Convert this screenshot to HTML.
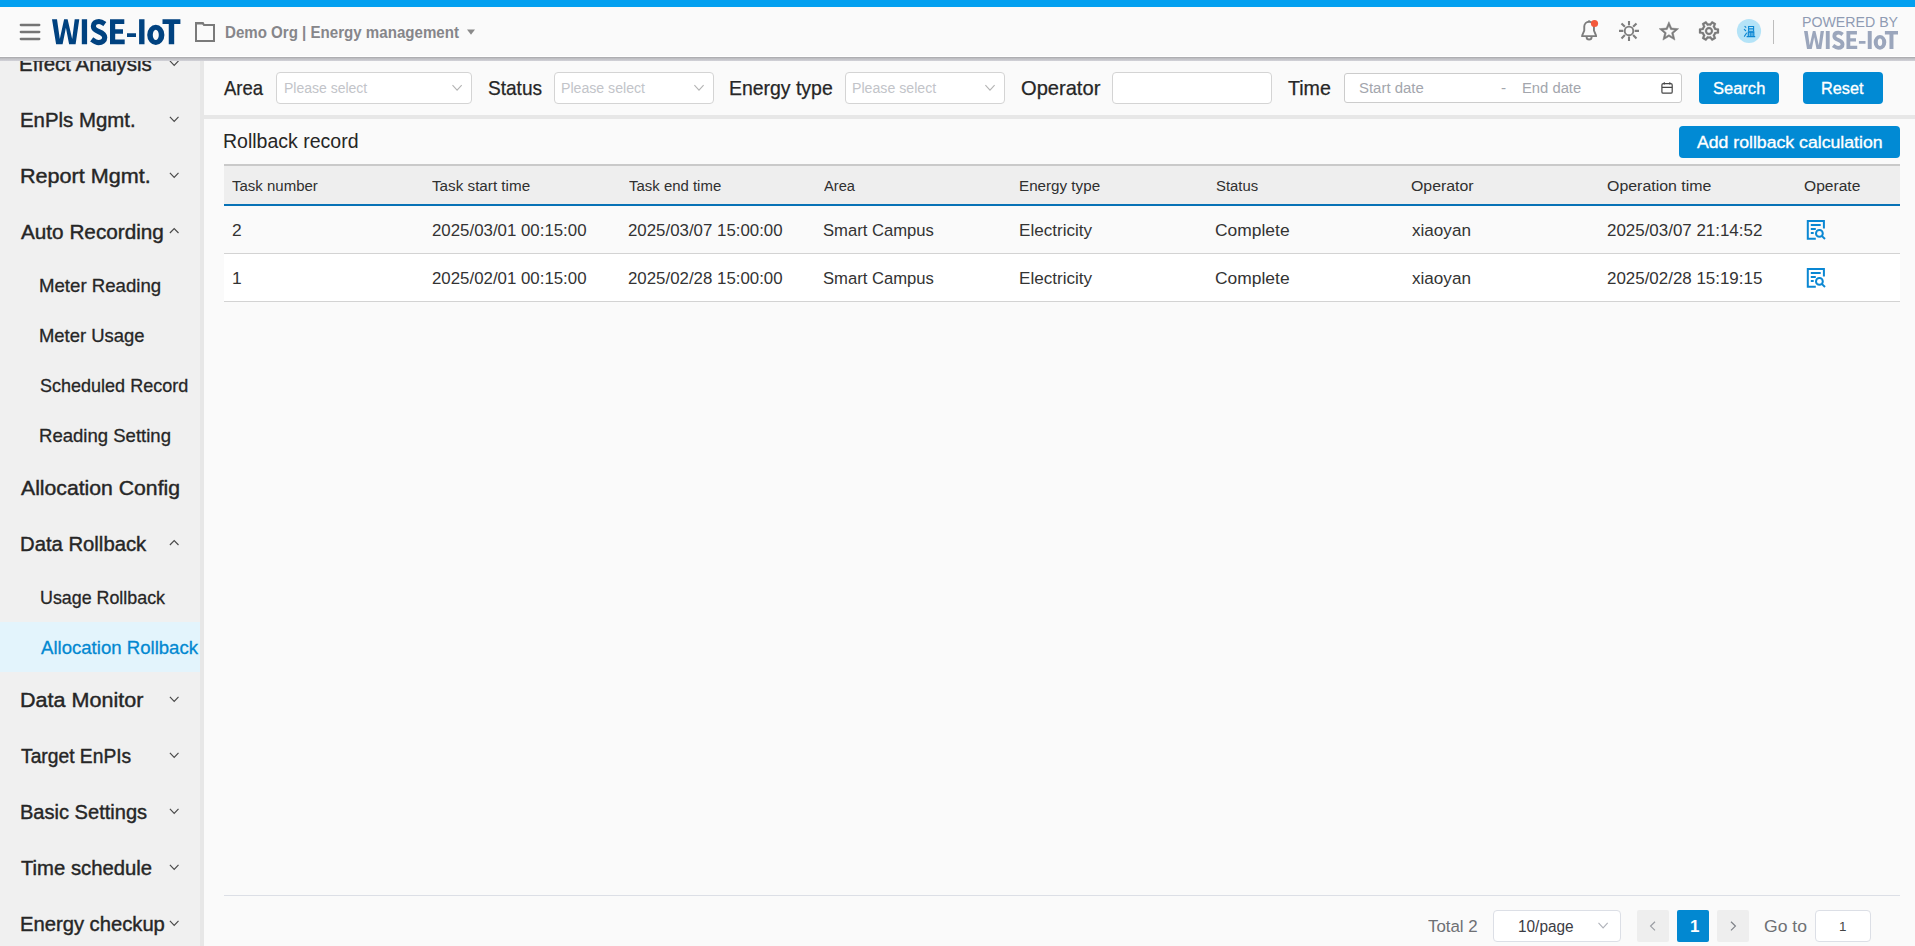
<!DOCTYPE html>
<html lang="en">
<head>
<meta charset="utf-8">
<title>WISE-IoT Energy management - Allocation Rollback</title>
<style>
*{box-sizing:border-box;margin:0;padding:0}
html,body{width:1915px;height:946px;overflow:hidden;background:#fafafa;font-family:"Liberation Sans",sans-serif;}
body{position:relative}
.abs,.t,.ico,.box{position:absolute}
.t{white-space:nowrap;line-height:1;transform-origin:0 50%;}
#topbar{left:0;top:0;width:1915px;height:7px;background:#03a0f0;z-index:30}
#header{left:0;top:7px;width:1915px;height:50px;background:#fafafa;border-bottom:1px solid #fff;z-index:20}
#hshadow{left:0;top:57px;width:1915px;height:4px;background:linear-gradient(#a6a6a8,#bdbdc1 35%,#d3d3d9);z-index:20}
#sidebar{left:0;top:57px;width:200px;height:889px;background:#f0f0f0;overflow:hidden}
#strip{left:200px;top:57px;width:4px;height:889px;background:#e7e7e7}
#gap{left:204px;top:115px;width:1711px;height:4px;background:#e7e7e7}
#active{left:0;top:565px;width:200px;height:50px;background:#e3f4fc}
.sel{background:#fff;border:1px solid #d4d4d4;border-radius:4px}
.btn{background:#018ad4;border-radius:4px}
#thead{left:224px;top:164px;width:1676px;height:42px;background:#eee;border-top:2px solid #c9c9c9;border-bottom:2px solid #0772b6}
.row{left:224px;width:1676px;height:48px;border-bottom:1px solid #d3d3d3}
#pgline{left:224px;top:895px;width:1676px;height:1px;background:#dcdfe6}
.pgb{background:#eeeeee;border-radius:2px;top:910px;width:32px;height:32px}
.logo{font-weight:bold;transform-origin:0 0;letter-spacing:0}
</style>
</head>
<body>
<div id="sidebar" class="abs">
<div id="active" class="abs"></div>
</div>
<div id="strip" class="abs"></div>
<div id="gap" class="abs"></div>

<!-- sidebar text (page coords) -->
<nav>
<span class="t" id="s_eff" style="left:19.00px;top:55.00px;font-size:19.9px;color:#262626;transform:scaleX(1.0292);-webkit-text-stroke:0.4px currentColor;">Effect Analysis</span>
<span class="t" id="s_enp" style="left:20.00px;top:111.00px;font-size:19.9px;color:#262626;transform:scaleX(1.0258);-webkit-text-stroke:0.4px currentColor;">EnPls Mgmt.</span>
<span class="t" id="s_rep" style="left:20.00px;top:167.00px;font-size:19.9px;color:#262626;transform:scaleX(1.0854);-webkit-text-stroke:0.4px currentColor;">Report Mgmt.</span>
<span class="t" id="s_auto" style="left:21.00px;top:223.00px;font-size:19.9px;color:#262626;transform:scaleX(1.0421);-webkit-text-stroke:0.4px currentColor;">Auto Recording</span>
<span class="t" id="s_alloc" style="left:21.00px;top:479.00px;font-size:19.9px;color:#262626;transform:scaleX(1.0653);-webkit-text-stroke:0.4px currentColor;">Allocation Config</span>
<span class="t" id="s_data" style="left:20.00px;top:535.00px;font-size:19.9px;color:#262626;transform:scaleX(1.0192);-webkit-text-stroke:0.4px currentColor;">Data Rollback</span>
<span class="t" id="s_mon" style="left:20.00px;top:691.00px;font-size:19.9px;color:#262626;transform:scaleX(1.0829);-webkit-text-stroke:0.4px currentColor;">Data Monitor</span>
<span class="t" id="s_tgt" style="left:21.00px;top:747.00px;font-size:19.9px;color:#262626;transform:scaleX(0.9682);-webkit-text-stroke:0.4px currentColor;">Target EnPIs</span>
<span class="t" id="s_bas" style="left:20.00px;top:803.00px;font-size:19.9px;color:#262626;transform:scaleX(1.0081);-webkit-text-stroke:0.4px currentColor;">Basic Settings</span>
<span class="t" id="s_tim" style="left:21.00px;top:859.00px;font-size:19.9px;color:#262626;transform:scaleX(1.0185);-webkit-text-stroke:0.4px currentColor;">Time schedule</span>
<span class="t" id="s_chk" style="left:20.00px;top:915.00px;font-size:19.9px;color:#262626;transform:scaleX(1.0155);-webkit-text-stroke:0.4px currentColor;">Energy checkup</span>
<span class="t" id="ss1" style="left:39.00px;top:276.00px;font-size:19.0px;color:#262626;transform:scaleX(0.9796);-webkit-text-stroke:0.3px currentColor;">Meter Reading</span>
<span class="t" id="ss2" style="left:39.00px;top:326.00px;font-size:19.0px;color:#262626;transform:scaleX(0.9703);-webkit-text-stroke:0.3px currentColor;">Meter Usage</span>
<span class="t" id="ss3" style="left:40.00px;top:376.00px;font-size:19.0px;color:#262626;transform:scaleX(0.9480);-webkit-text-stroke:0.3px currentColor;">Scheduled Record</span>
<span class="t" id="ss4" style="left:39.00px;top:426.00px;font-size:19.0px;color:#262626;transform:scaleX(0.9759);-webkit-text-stroke:0.3px currentColor;">Reading Setting</span>
<span class="t" id="ss5" style="left:40.00px;top:588.00px;font-size:19.0px;color:#262626;transform:scaleX(0.9393);-webkit-text-stroke:0.3px currentColor;">Usage Rollback</span>
<span class="t" id="ss6" style="left:41.00px;top:638.00px;font-size:19.0px;color:#0288d1;transform:scaleX(0.9781);-webkit-text-stroke:0.3px currentColor;">Allocation Rollback</span>
<svg class="ico" style="left:0;top:0" width="200" height="946" viewBox="0 0 200 946">
<path d="M169.9 60.9L174.2 65.3L178.5 60.9" stroke="#4a4a4a" stroke-width="1.2" fill="none"/>
<path d="M169.9 116.9L174.2 121.3L178.5 116.9" stroke="#4a4a4a" stroke-width="1.2" fill="none"/>
<path d="M169.9 172.9L174.2 177.3L178.5 172.9" stroke="#4a4a4a" stroke-width="1.2" fill="none"/>
<path d="M169.9 233.0L174.2 228.6L178.5 233.0" stroke="#4a4a4a" stroke-width="1.2" fill="none"/>
<path d="M169.9 545.0L174.2 540.6L178.5 545.0" stroke="#4a4a4a" stroke-width="1.2" fill="none"/>
<path d="M169.9 696.9L174.2 701.3L178.5 696.9" stroke="#4a4a4a" stroke-width="1.2" fill="none"/>
<path d="M169.9 752.9L174.2 757.3L178.5 752.9" stroke="#4a4a4a" stroke-width="1.2" fill="none"/>
<path d="M169.9 808.9L174.2 813.3L178.5 808.9" stroke="#4a4a4a" stroke-width="1.2" fill="none"/>
<path d="M169.9 864.9L174.2 869.3L178.5 864.9" stroke="#4a4a4a" stroke-width="1.2" fill="none"/>
<path d="M169.9 920.9L174.2 925.3L178.5 920.9" stroke="#4a4a4a" stroke-width="1.2" fill="none"/>
</svg>
</nav>

<div id="topbar" class="abs"></div>
<div id="header" class="abs"></div>
<div id="hshadow" class="abs"></div>

<!-- header content -->
<div class="abs" style="left:0;top:0;z-index:25">
<svg class="ico" style="left:18px;top:20px" width="26" height="24" viewBox="0 0 26 24"><path d="M2.8 5H21.3M2.8 12H21.3M2.8 19H21.3" stroke="#747474" stroke-width="2.3" stroke-linecap="round"/></svg>
<svg class="ico" style="left:48px;top:14px;color:#004280" width="136" height="36" viewBox="48 14 136 36" fill="currentColor" role="img" aria-label="WISE-IoT"><path d="M52 19.3L57 19.3L59.8 39.1L64.1 19.3L67.6 19.3L72.2 39.1L74.7 19.3L79.3 19.3L75.6 44.3L69.1 44.3L65.9 27.8L62.6 44.3L56.1 44.3ZM81.8 19.3H87.1V44.3H81.8ZM110 19.3H124.3V24H115.2V29.3H123V33.8H115.2V39.6H124.7V44.3H110ZM127 33.2H136V36.9H127ZM139.1 19.3H144.5V44.3H139.1ZM162.5 19.3H180.4V23.9H174.2V44.3H168.75V23.9H162.5Z"/><path fill-rule="evenodd" d="M147.2 34.9A8.6 10.2 0 1 0 164.4 34.9A8.6 10.2 0 1 0 147.2 34.9ZM152.8 34.9A3 5.2 0 1 1 158.8 34.9A3 5.2 0 1 1 152.8 34.9Z"/><path fill="none" stroke="currentColor" stroke-width="5.2" d="M104.8 24.1C103.2 22.9 101.6 21.5 99 21.5C95.6 21.5 93.4 23.4 93.4 26.3C93.4 29.3 95.8 30.5 99 31.7C102.4 33 104.7 34.4 104.7 37.6C104.7 40.8 102.2 42.6 98.6 42.6C95.6 42.6 93.3 40.5 91.7 39.3"/></svg>
<svg class="ico" style="left:194px;top:21px" width="24" height="23" viewBox="0 0 24 23"><path d="M2 20V2H8.6L10 4H20V20Z" fill="none" stroke="#7a7a7a" stroke-width="2" stroke-linejoin="miter"/><path d="M1 1H9.3L10.6 3.4H1Z" fill="#7a7a7a"/></svg>
<span class="t" id="h_org" style="left:225.00px;top:24.00px;font-size:17.1px;color:#86868a;transform:scaleX(0.8826);font-weight:bold;">Demo Org | Energy management</span>
<svg class="ico" style="left:466px;top:28px" width="10" height="8" viewBox="0 0 10 8"><path d="M1 1.6H9L5 6.8Z" fill="#8a8a8a"/></svg>

<!-- bell -->
<svg class="ico" style="left:1577px;top:17px" width="26" height="26" viewBox="0 0 26 26" fill="none" stroke="#7d7d7d" stroke-width="1.9">
<path d="M4.2 19.1H20M5 18.8L7.25 13.5V9.6A4.85 4.85 0 0 1 16.95 9.6V13.5L19.2 18.8"/><path d="M9.6 19.9A2.5 2.6 0 0 0 14.6 19.9"/><path d="M12.1 4.6V3.4" stroke-width="2"/>
<circle cx="17.5" cy="6.5" r="3.6" fill="#f4593b" stroke="none"/></svg>
<!-- sun -->
<svg class="ico" style="left:1617px;top:19px" width="24" height="24" viewBox="0 0 24 24" fill="none" stroke="#7d7d7d" stroke-width="1.9">
<circle cx="12" cy="11.9" r="4.3"/><path stroke-width="2.1" d="M12 1.9V6.2M12 17.6V21.9M2 11.9H6.3M17.7 11.9H22M4.5 4.4L7.9 7.8M16.1 16L19.5 19.4M19.5 4.4L16.1 7.8M7.9 16L4.5 19.4"/></svg>
<!-- star -->
<svg class="ico" style="left:1657px;top:19px" width="24" height="24" viewBox="0 0 24 24"><path transform="translate(0.25 0.7) scale(0.972)" fill="#7b7b7b" stroke="#7b7b7b" stroke-width="0.55" d="M22 9.24l-7.19-.62L12 2 9.19 8.63 2 9.24l5.46 4.73L5.82 21 12 17.27 18.18 21l-1.63-7.03L22 9.24zM12 15.4l-3.76 2.27 1-4.28-3.32-2.88 4.38-.38L12 6.1l1.71 4.04 4.38.38-3.32 2.88 1 4.28L12 15.4z"/></svg>
<!-- gear -->
<svg class="ico" style="left:1697px;top:19px" width="24" height="24" viewBox="0 0 24 24"><g transform="rotate(90 12 12)" fill="#7b7b7b" stroke="#7b7b7b" stroke-width="0.25"><path d="M19.43 12.98c.04-.32.07-.64.07-.98 0-.34-.03-.66-.07-.98l2.11-1.65c.19-.15.24-.42.12-.64l-2-3.46c-.09-.16-.26-.25-.44-.25-.06 0-.12.01-.17.03l-2.49 1c-.52-.4-1.08-.73-1.69-.98l-.38-2.65C14.46 2.18 14.25 2 14 2h-4c-.25 0-.46.18-.49.42l-.38 2.65c-.61.25-1.17.59-1.69.98l-2.49-1c-.06-.02-.12-.03-.18-.03-.17 0-.34.09-.43.25l-2 3.46c-.13.22-.07.49.12.64l2.11 1.65c-.04.32-.07.65-.07.98 0 .33.03.66.07.98l-2.11 1.65c-.19.15-.24.42-.12.64l2 3.46c.09.16.26.25.44.25.06 0 .12-.01.17-.03l2.49-1c.52.4 1.08.73 1.69.98l.38 2.65c.03.24.24.42.49.42h4c.25 0 .46-.18.49-.42l.38-2.65c.61-.25 1.17-.59 1.69-.98l2.49 1c.06.02.12.03.18.03.17 0 .34-.09.43-.25l2-3.46c.12-.22.07-.49-.12-.64l-2.11-1.65zm-1.98-1.71c.04.31.05.52.05.73 0 .21-.02.43-.05.73l-.14 1.13.89.7 1.08.84-.7 1.21-1.27-.51-1.04-.42-.9.68c-.43.32-.84.56-1.25.73l-1.06.43-.16 1.13-.2 1.35h-1.4l-.19-1.35-.16-1.13-1.06-.43c-.43-.18-.83-.41-1.23-.71l-.91-.7-1.06.43-1.27.51-.7-1.21 1.08-.84.89-.7-.14-1.13c-.03-.31-.05-.54-.05-.74s.02-.43.05-.73l.14-1.13-.89-.7-1.08-.84.7-1.21 1.27.51 1.04.42.9-.68c.43-.32.84-.56 1.25-.73l1.06-.43.16-1.13.2-1.35h1.39l.19 1.35.16 1.13 1.06.43c.43.18.83.41 1.23.71l.91.7 1.06-.43 1.27-.51.7 1.21-1.07.85-.89.7.14 1.13zM12 8c-2.21 0-4 1.79-4 4s1.79 4 4 4 4-1.79 4-4-1.79-4-4-4zm0 6c-1.1 0-2-.9-2-2s.9-2 2-2 2 .9 2 2-.9 2-2 2z"/></g></svg>
<!-- avatar -->
<svg class="ico" style="left:1736px;top:18px" width="26" height="26" viewBox="0 0 26 26"><circle cx="13" cy="13" r="12.1" fill="#b4e3f7"/>
<g stroke="#0a86d2" fill="none" stroke-width="1.1"><path d="M12.6 8.5H17.6V13.3H12.6Z M12.6 10.9H17.6"/><path d="M11.6 14.2H18.4M12.3 14.2V18.3M14.2 14.2V18.3M16 14.2V18.3M17.8 14.2V18.3M10.6 18.6H19.2" stroke-width="1.2"/><path d="M8.6 8.2L10.2 9.6M8 11.2L10 13M8.2 18.6L10.8 14.8" stroke-width="1.1"/></g></svg>
<div class="abs" style="left:1773px;top:20px;width:1px;height:24px;background:#bdbdbd"></div>
<span class="t" id="h_pow" style="left:1802.00px;top:14.00px;font-size:15.1px;color:#8f9bb3;transform:scaleX(0.9385);">POWERED BY</span>
<svg class="ico" style="left:1800px;top:28px;color:#9ba6bc" width="102" height="24" viewBox="1800 28 102 24" fill="currentColor" role="img" aria-label="WISE-IoT"><g transform="translate(1765.94 17.2) scale(0.732 0.72)"><path d="M52 19.3L57 19.3L59.8 39.1L64.1 19.3L67.6 19.3L72.2 39.1L74.7 19.3L79.3 19.3L75.6 44.3L69.1 44.3L65.9 27.8L62.6 44.3L56.1 44.3ZM81.8 19.3H87.1V44.3H81.8ZM110 19.3H124.3V24H115.2V29.3H123V33.8H115.2V39.6H124.7V44.3H110ZM127 33.2H136V36.9H127ZM139.1 19.3H144.5V44.3H139.1ZM162.5 19.3H180.4V23.9H174.2V44.3H168.75V23.9H162.5Z"/><path fill-rule="evenodd" d="M147.2 34.9A8.6 10.2 0 1 0 164.4 34.9A8.6 10.2 0 1 0 147.2 34.9ZM152.8 34.9A3 5.2 0 1 1 158.8 34.9A3 5.2 0 1 1 152.8 34.9Z"/><path fill="none" stroke="currentColor" stroke-width="5.2" d="M104.8 24.1C103.2 22.9 101.6 21.5 99 21.5C95.6 21.5 93.4 23.4 93.4 26.3C93.4 29.3 95.8 30.5 99 31.7C102.4 33 104.7 34.4 104.7 37.6C104.7 40.8 102.2 42.6 98.6 42.6C95.6 42.6 93.3 40.5 91.7 39.3"/></g></svg>
</div>

<!-- filter bar -->
<section>
<span class="t" id="f_area" style="left:224.00px;top:79.00px;font-size:19.8px;color:#262626;transform:scaleX(0.9359);-webkit-text-stroke:0.25px currentColor;">Area</span>
<span class="t" id="f_status" style="left:488.00px;top:79.00px;font-size:19.8px;color:#262626;transform:scaleX(0.9636);-webkit-text-stroke:0.25px currentColor;">Status</span>
<span class="t" id="f_energy" style="left:729.00px;top:79.00px;font-size:19.8px;color:#262626;transform:scaleX(0.9822);-webkit-text-stroke:0.25px currentColor;">Energy type</span>
<span class="t" id="f_oper" style="left:1021.00px;top:79.00px;font-size:19.8px;color:#262626;transform:scaleX(1.0163);-webkit-text-stroke:0.25px currentColor;">Operator</span>
<span class="t" id="f_time" style="left:1288.00px;top:79.00px;font-size:19.8px;color:#262626;transform:scaleX(0.9922);-webkit-text-stroke:0.25px currentColor;">Time</span>
<div class="abs sel" style="left:276px;top:72px;width:196px;height:32px"></div>
<div class="abs sel" style="left:554px;top:72px;width:160px;height:32px"></div>
<div class="abs sel" style="left:845px;top:72px;width:160px;height:32px"></div>
<div class="abs sel" style="left:1112px;top:72px;width:160px;height:32px"></div>
<div class="abs sel" style="left:1344px;top:73px;width:338px;height:30px;border-color:#cccccc;border-radius:3px"></div>
<span class="t" id="p1" style="left:284.00px;top:80.00px;font-size:15.4px;color:#c2c4c9;transform:scaleX(0.9088);">Please select</span>
<span class="t" id="p2" style="left:561.00px;top:80.00px;font-size:15.4px;color:#c2c4c9;transform:scaleX(0.9176);">Please select</span>
<span class="t" id="p3" style="left:852.00px;top:80.00px;font-size:15.4px;color:#c2c4c9;transform:scaleX(0.9192);">Please select</span>
<span class="t" id="d_start" style="left:1359.00px;top:80.00px;font-size:15.3px;color:#a3a6ad;transform:scaleX(0.9759);">Start date</span>
<span class="t" id="d_dash" style="left:1501.00px;top:80.00px;font-size:15.3px;color:#a3a6ad;">-</span>
<span class="t" id="d_end" style="left:1522.00px;top:80.00px;font-size:15.3px;color:#a3a6ad;transform:scaleX(0.9664);">End date</span>
<svg class="ico" style="left:0;top:0" width="1915" height="120" viewBox="0 0 1915 120">
<path d="M452.5 85.2L457.1 90.2L461.7 85.2" stroke="#b4b4b4" stroke-width="1.1" fill="none"/>
<path d="M694.4 85.2L699.0 90.2L703.6 85.2" stroke="#b4b4b4" stroke-width="1.1" fill="none"/>
<path d="M985.4 85.2L990.0 90.2L994.6 85.2" stroke="#b4b4b4" stroke-width="1.1" fill="none"/>
<g stroke="#474747" fill="none" stroke-width="1.2"><rect x="1661.9" y="83.7" width="10.3" height="9.5" rx="1.3"/><path d="M1662 87.4H1672.2M1664.3 82.2V84.4M1669.8 82.2V84.4"/></g>
</svg>
<div class="abs btn" style="left:1699px;top:72px;width:80px;height:32px"></div>
<div class="abs btn" style="left:1803px;top:72px;width:80px;height:32px"></div>
<span class="t" id="b_search" style="left:1713.00px;top:80.00px;font-size:17.4px;color:#fff;transform:scaleX(0.9493);-webkit-text-stroke:0.35px currentColor;">Search</span>
<span class="t" id="b_reset" style="left:1821.00px;top:80.00px;font-size:17.4px;color:#fff;transform:scaleX(0.9351);-webkit-text-stroke:0.35px currentColor;">Reset</span>
</section>

<!-- panel -->
<section>
<span class="t" id="title" style="left:223.00px;top:132.00px;font-size:19.6px;color:#262626;transform:scaleX(0.9960);">Rollback record</span>
<div class="abs btn" style="left:1679px;top:126px;width:221px;height:32px"></div>
<span class="t" id="b_add" style="left:1697.00px;top:134.00px;font-size:17.4px;color:#fff;transform:scaleX(1.0154);-webkit-text-stroke:0.35px currentColor;">Add rollback calculation</span>
<div id="thead" class="abs"></div>
<div class="abs row" style="top:206px;background:#fafafa"></div>
<div class="abs row" style="top:254px;background:#fff"></div>
<span class="t" id="th1" style="left:232.00px;top:178.00px;font-size:15.4px;color:#303030;transform:scaleX(0.9737);">Task number</span>
<span class="t" id="th2" style="left:432.00px;top:178.00px;font-size:15.4px;color:#303030;transform:scaleX(0.9892);">Task start time</span>
<span class="t" id="th3" style="left:629.00px;top:178.00px;font-size:15.4px;color:#303030;transform:scaleX(0.9710);">Task end time</span>
<span class="t" id="th4" style="left:824.00px;top:178.00px;font-size:15.4px;color:#303030;transform:scaleX(0.9517);">Area</span>
<span class="t" id="th5" style="left:1019.00px;top:178.00px;font-size:15.4px;color:#303030;transform:scaleX(0.9874);">Energy type</span>
<span class="t" id="th6" style="left:1216.00px;top:178.00px;font-size:15.4px;color:#303030;transform:scaleX(0.9641);">Status</span>
<span class="t" id="th7" style="left:1411.00px;top:178.00px;font-size:15.4px;color:#303030;transform:scaleX(1.0314);">Operator</span>
<span class="t" id="th8" style="left:1607.00px;top:178.00px;font-size:15.4px;color:#303030;transform:scaleX(1.0341);">Operation time</span>
<span class="t" id="th9" style="left:1804.00px;top:178.00px;font-size:15.4px;color:#303030;transform:scaleX(1.0131);">Operate</span>
<span class="t" id="r0c0" style="left:232.00px;top:222.00px;font-size:17.4px;color:#333;">2</span>
<span class="t" id="r0c1" style="left:432.00px;top:222.00px;font-size:17.4px;color:#333;transform:scaleX(0.9684);">2025/03/01 00:15:00</span>
<span class="t" id="r0c2" style="left:628.00px;top:222.00px;font-size:17.4px;color:#333;transform:scaleX(0.9689);">2025/03/07 15:00:00</span>
<span class="t" id="r0c3" style="left:823.00px;top:222.00px;font-size:17.4px;color:#333;transform:scaleX(0.9566);">Smart Campus</span>
<span class="t" id="r0c4" style="left:1019.00px;top:222.00px;font-size:17.4px;color:#333;transform:scaleX(0.9831);">Electricity</span>
<span class="t" id="r0c5" style="left:1215.00px;top:222.00px;font-size:17.4px;color:#333;transform:scaleX(1.0019);">Complete</span>
<span class="t" id="r0c6" style="left:1412.00px;top:222.00px;font-size:17.4px;color:#333;transform:scaleX(0.9834);">xiaoyan</span>
<span class="t" id="r0c7" style="left:1607.00px;top:222.00px;font-size:17.4px;color:#333;transform:scaleX(0.9732);">2025/03/07 21:14:52</span>
<span class="t" id="r1c0" style="left:232.00px;top:270.00px;font-size:17.4px;color:#333;">1</span>
<span class="t" id="r1c1" style="left:432.00px;top:270.00px;font-size:17.4px;color:#333;transform:scaleX(0.9684);">2025/02/01 00:15:00</span>
<span class="t" id="r1c2" style="left:628.00px;top:270.00px;font-size:17.4px;color:#333;transform:scaleX(0.9689);">2025/02/28 15:00:00</span>
<span class="t" id="r1c3" style="left:823.00px;top:270.00px;font-size:17.4px;color:#333;transform:scaleX(0.9566);">Smart Campus</span>
<span class="t" id="r1c4" style="left:1019.00px;top:270.00px;font-size:17.4px;color:#333;transform:scaleX(0.9831);">Electricity</span>
<span class="t" id="r1c5" style="left:1215.00px;top:270.00px;font-size:17.4px;color:#333;transform:scaleX(1.0019);">Complete</span>
<span class="t" id="r1c6" style="left:1412.00px;top:270.00px;font-size:17.4px;color:#333;transform:scaleX(0.9834);">xiaoyan</span>
<span class="t" id="r1c7" style="left:1607.00px;top:270.00px;font-size:17.4px;color:#333;transform:scaleX(0.9732);">2025/02/28 15:19:15</span>
<svg class="ico" style="left:1806px;top:219px" width="22" height="23" viewBox="0 0 22 23" fill="none" stroke="#0a87d3" stroke-width="2">
<path d="M9.8 19.8H1.8V2H17.9V9.6"/><path d="M4.8 5.9H14.7M4.8 9.9H9.8M4.8 13.9H7.7"/>
<circle cx="13.4" cy="14.4" r="3.4"/><path d="M16 17.1L19 20"/></svg>
<svg class="ico" style="left:1806px;top:267px" width="22" height="23" viewBox="0 0 22 23" fill="none" stroke="#0a87d3" stroke-width="2">
<path d="M9.8 19.8H1.8V2H17.9V9.6"/><path d="M4.8 5.9H14.7M4.8 9.9H9.8M4.8 13.9H7.7"/>
<circle cx="13.4" cy="14.4" r="3.4"/><path d="M16 17.1L19 20"/></svg>
<div id="pgline" class="abs"></div>
<span class="t" id="pg_total" style="left:1428.00px;top:918.00px;font-size:17.2px;color:#6e7074;transform:scaleX(0.9805);">Total 2</span>
<span class="t" id="pg_goto" style="left:1764.00px;top:918.00px;font-size:17.2px;color:#6e7074;transform:scaleX(1.0214);">Go to</span>
<div class="abs sel" style="left:1493px;top:910px;width:128px;height:32px;border-color:#dcdfe6"></div>
<div class="abs pgb" style="left:1637px"></div>
<div class="abs pgb" style="left:1677px;background:#0288d1"></div>
<div class="abs pgb" style="left:1717px"></div>
<div class="abs sel" style="left:1815px;top:910px;width:56px;height:32px;border-color:#dcdfe6"></div>
<span class="t" id="pg_size" style="left:1518.00px;top:919.00px;font-size:15.6px;color:#3c3c44;transform:scaleX(0.9870);">10/page</span>
<span class="t" id="pg_1" style="left:1690.00px;top:918.00px;font-size:17.0px;color:#fff;font-weight:bold;">1</span>
<span class="t" id="pg_in" style="left:1839.00px;top:920.00px;font-size:13.4px;color:#444;">1</span>
<svg class="ico" style="left:1490px;top:905px" width="270" height="41" viewBox="1490 905 270 41" fill="none">
<path d="M1598.5 922.9L1603.1 927.9L1607.7 922.9" stroke="#b0b3ba" stroke-width="1.1" fill="none"/>
<path d="M1655 921.8L1650.6 926.1L1655 930.4" stroke="#9a9da3" stroke-width="1.2"/>
<path d="M1731 921.8L1735.4 926.1L1731 930.4" stroke="#7d8087" stroke-width="1.2"/>
</svg>
</section>
</body>
</html>
